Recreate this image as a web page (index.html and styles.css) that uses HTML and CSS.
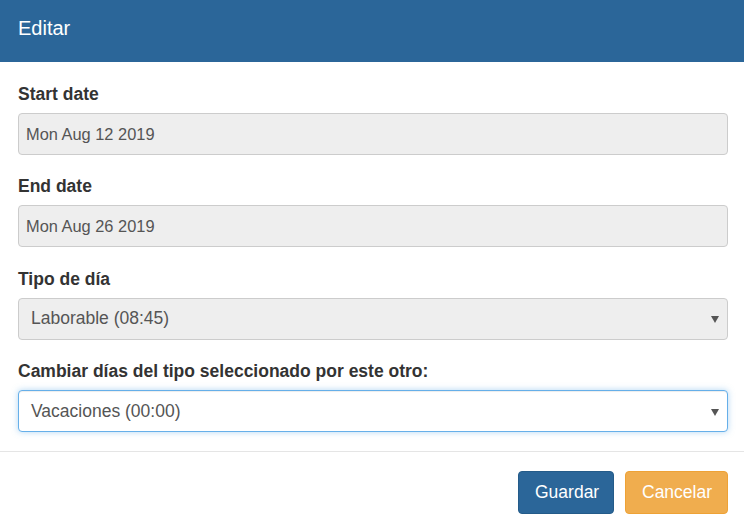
FILE: index.html
```html
<!DOCTYPE html>
<html lang="es">
<head>
<meta charset="utf-8">
<title>Editar</title>
<link rel="stylesheet" href="styles.css">
</head>
<body>
<div class="modal">
  <div class="modal-header"><h4 class="modal-title">Editar</h4></div>
  <div class="modal-body">
    <div class="form-group">
      <label class="label">Start date</label>
      <div class="control disabled">Mon Aug 12 2019</div>
    </div>
    <div class="form-group">
      <label class="label">End date</label>
      <div class="control disabled">Mon Aug 26 2019</div>
    </div>
    <div class="form-group">
      <label class="label">Tipo de día</label>
      <div class="control select disabled"><span>Laborable (08:45)</span><span class="caret"></span></div>
    </div>
    <div class="form-group">
      <label class="label">Cambiar días del tipo seleccionado por este otro:</label>
      <div class="control select focus"><span>Vacaciones (00:00)</span><span class="caret"></span></div>
    </div>
  </div>
  <div class="modal-footer">
    <button class="btn btn-primary">Guardar</button>
    <button class="btn btn-warning">Cancelar</button>
  </div>
</div>
</body>
</html>
```

FILE: styles.css
```css
* { box-sizing: border-box; }
html, body { margin: 0; padding: 0; background: #fff; }
body { font-family: "Liberation Sans", Arial, sans-serif; color: #333; width: 744px; height: 530px; overflow: hidden; }
.modal { display: flex; flex-direction: column; }
.modal-header { background: #2b6699; height: 62px; display: flex; align-items: center; padding: 0 18px; }
.modal-title { margin: 0; font-size: 20px; font-weight: normal; color: #fff; line-height: 1; position: relative; top: -3px; }
.modal-body { padding: 20px 16px 0 18px; display: flex; flex-direction: column; gap: 19.4px; }
.form-group { display: flex; flex-direction: column; }
.label { font-weight: bold; font-size: 17.5px; line-height: 20px; margin-top: 2px; margin-bottom: 9px; color: #333; }
.control { height: 42px; border: 1px solid #ccc; border-radius: 4px; font-size: 16.4px; color: #555; display: flex; align-items: center; padding: 0 7px; }
.disabled { background: #eee; }
.select { padding: 0 12px; justify-content: space-between; font-size: 17.5px; }
.focus { background: #fff; border-color: #66afe9; box-shadow: inset 0 1px 1px rgba(0,0,0,.075), 0 0 6px rgba(102,175,233,.5); }
.caret { width: 0; height: 0; border-left: 4px solid transparent; border-right: 4px solid transparent; border-top: 7px solid #555; margin-right: -4px; margin-top: 2px; }
.modal-footer { margin-top: 19px; border-top: 1px solid #e5e5e5; padding: 19px 16px 0 0; display: flex; justify-content: flex-end; gap: 11px; }
.btn { font-family: "Liberation Sans", Arial, sans-serif; font-size: 17.5px; color: #fff; border: 1px solid transparent; border-radius: 4px; height: 43px; padding: 0 16px; cursor: pointer; }
.btn-primary { background: #2b6699; border-color: #245b89; width: 96px; }
.btn-warning { background: #f0ad4e; border-color: #eea236; width: 103px; }
```
